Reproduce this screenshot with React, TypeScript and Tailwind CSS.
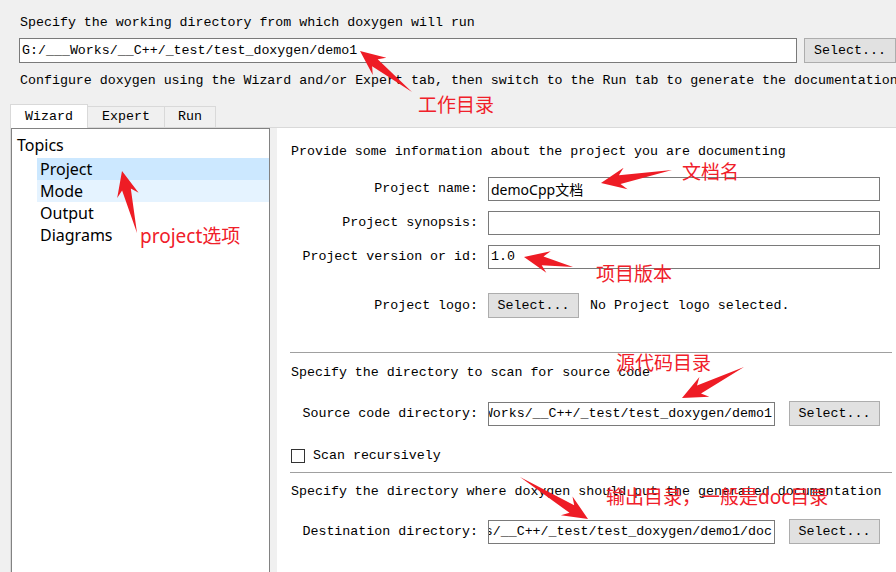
import React from "react";

const mono = "font-['Liberation_Mono','Noto_Sans_CJK_SC',monospace] text-[13.3px] text-black";
const sans = "font-['Noto_Sans','Noto_Sans_CJK_SC',sans-serif]";

type Pt = [number, number];

// red screenshot-tool style arrows, tail -> tip
const ARROWS: [Pt, Pt][] = [
  [[412, 92], [360, 51]],
  [[137, 233], [122, 171]],
  [[672, 170], [601, 183]],
  [[573, 267], [524, 257]],
  [[744, 367], [682, 398]],
  [[520, 477], [588, 519]],
];

const NOTES = [
  { text: "工作目录", x: 418, y: 95 },
  { text: "project选项", x: 140, y: 226 },
  { text: "文档名", x: 682, y: 162 },
  { text: "项目版本", x: 596, y: 264 },
  { text: "源代码目录", x: 616, y: 353 },
  { text: "输出目录，一般是doc目录", x: 606, y: 487 },
];

function arrowPoints([tail, tip]: [Pt, Pt]) {
  const dx = tip[0] - tail[0];
  const dy = tip[1] - tail[1];
  const len = Math.hypot(dx, dy);
  const ux = dx / len;
  const uy = dy / len;
  const nx = -uy;
  const ny = ux;
  const h = 22;
  const w = 11;
  const s = 4.5;
  const at = (d: number, o: number): Pt => [tip[0] - ux * d + nx * o, tip[1] - uy * d + ny * o];
  const pts: Pt[] = [tail, at(h - 3, s), at(h + 3, w), tip, at(h + 3, -w), at(h - 3, -s)];
  return pts.map((p) => `${p[0].toFixed(1)},${p[1].toFixed(1)}`).join(" ");
}

function TextBox({ value, className = "", font = mono }: { value: string; className?: string; font?: string }) {
  return (
    <div className={`h-[24px] bg-white border border-[#7a7a7a] flex items-center justify-end overflow-hidden px-[2px] ${className}`}>
      <span className={`whitespace-nowrap shrink-0 ${font}`}>{value}</span>
    </div>
  );
}

function LeftBox({ value, className = "", font = mono }: { value: string; className?: string; font?: string }) {
  return (
    <div className={`h-[24px] bg-white border border-[#7a7a7a] flex items-center overflow-hidden px-[2px] ${className}`}>
      <span className={`whitespace-nowrap ${font}`}>{value}</span>
    </div>
  );
}

function SelectButton({ className = "" }: { className?: string }) {
  return (
    <div className={`h-[25px] bg-[#e1e1e1] border border-[#adadad] flex items-center justify-center ${mono} ${className}`}>
      Select...
    </div>
  );
}

function Row({ label, children, className = "" }: { label: string; children: React.ReactNode; className?: string }) {
  return (
    <div className={`flex items-center ${className}`}>
      <div className={`w-[187px] text-right whitespace-nowrap ${mono}`}>{label}</div>
      <div className="ml-[10px] flex items-center">{children}</div>
    </div>
  );
}

function Separator({ className = "" }: { className?: string }) {
  return <div className={`-ml-[1px] w-[602px] border-t border-[#a0a0a0] border-b border-b-white ${className}`} />;
}

export default function App() {
  return (
    <div className="relative w-[896px] h-[572px] overflow-hidden bg-[#f0f0f0] flex flex-col">
      <div className="pl-[20px] pt-[14px] shrink-0">
        <div className={`leading-[18px] whitespace-nowrap ${mono}`}>Specify the working directory from which doxygen will run</div>
        <div className="flex mt-[6px] -ml-[1px]">
          <LeftBox value="G:/___Works/__C++/_test/test_doxygen/demo1" className="w-[782px] h-[25px]" />
          <SelectButton className="ml-[7px] w-[92px] shrink-0" />
        </div>
        <div className={`mt-[9px] leading-[18px] whitespace-nowrap ${mono}`}>
          Configure doxygen using the Wizard and/or Expert tab, then switch to the Run tab to generate the documentation
        </div>
      </div>

      <div className="ml-[10px] mt-[14px] h-[23px] flex shrink-0">
        <div className={`relative z-10 self-start w-[78px] h-[24px] bg-white border-t border-l border-r border-[#d9d9d9] flex items-center justify-center ${mono}`}>
          Wizard
        </div>
        <div className={`self-end w-[77px] h-[21px] border-t border-r border-[#d9d9d9] flex items-center justify-center ${mono}`}>
          Expert
        </div>
        <div className={`self-end w-[51px] h-[21px] border-t border-r border-[#d9d9d9] flex items-center justify-center ${mono}`}>
          Run
        </div>
      </div>

      <div className="ml-[10px] h-[460px] shrink-0 border-t border-l border-[#d9d9d9] flex">
        <div className={`w-[259px] h-full bg-white border border-[#828282] pt-[5px] text-[16px] text-black ${sans}`}>
          <div className="h-[22px] pl-[5px] leading-[22px]">Topics</div>
          <div className="mt-[2px] ml-[25px] h-[22px] pl-[3px] leading-[22px] bg-[#cce8ff]">Project</div>
          <div className="ml-[25px] h-[22px] pl-[3px] leading-[22px] bg-[#e5f3ff]">Mode</div>
          <div className="ml-[25px] h-[22px] pl-[3px] leading-[22px]">Output</div>
          <div className="ml-[25px] h-[22px] pl-[3px] leading-[22px]">Diagrams</div>
        </div>
        <div className="w-[7px] bg-[#f0f0f0]" />
        <div className="flex-1 bg-white pl-[14px] pt-[15px]">
          <div className={`leading-[18px] whitespace-nowrap ${mono}`}>Provide some information about the project you are documenting</div>
          <Row label="Project name:" className="mt-[16px]">
            <LeftBox value="demoCpp文档" font={`${sans} text-[14px] text-black`} className="w-[392px]" />
          </Row>
          <Row label="Project synopsis:" className="mt-[10px]">
            <LeftBox value="" className="w-[392px]" />
          </Row>
          <Row label="Project version or id:" className="mt-[10px]">
            <LeftBox value="1.0" className="w-[392px]" />
          </Row>
          <Row label="Project logo:" className="mt-[24px]">
            <SelectButton className="w-[91px]" />
            <span className={`ml-[11px] whitespace-nowrap ${mono}`}>No Project logo selected.</span>
          </Row>
          <Separator className="mt-[34px]" />
          <div className={`mt-[10px] leading-[18px] whitespace-nowrap ${mono}`}>Specify the directory to scan for source code</div>
          <Row label="Source code directory:" className="mt-[19px]">
            <TextBox value="G:/___Works/__C++/_test/test_doxygen/demo1" className="w-[287px]" />
            <SelectButton className="ml-[14px] w-[91px]" />
          </Row>
          <div className="mt-[21px] h-[18px] flex items-center">
            <div className="w-[14px] h-[14px] bg-white border border-[#333333]" />
            <span className={`ml-[8px] ${mono}`}>Scan recursively</span>
          </div>
          <Separator className="mt-[7px]" />
          <div className={`mt-[9px] leading-[18px] whitespace-nowrap ${mono}`}>
            Specify the directory where doxygen should put the generated documentation
          </div>
          <Row label="Destination directory:" className="mt-[18px]">
            <TextBox value="G:/___Works/__C++/_test/test_doxygen/demo1/doc" className="w-[287px]" />
            <SelectButton className="ml-[14px] w-[91px]" />
          </Row>
        </div>
      </div>

      <svg className="absolute left-0 top-0 pointer-events-none" width={896} height={572}>
        {ARROWS.map((a, i) => (
          <polygon key={`arrow-${i}`} points={arrowPoints(a)} fill="#ee1c25" />
        ))}
      </svg>
      {NOTES.map((n) => (
        <div
          key={`note-${n.text}`}
          className={`absolute whitespace-nowrap text-[19px] leading-[20px] text-[#f0202a] ${sans}`}
          style={{ left: n.x, top: n.y }}
        >
          {n.text}
        </div>
      ))}
    </div>
  );
}
